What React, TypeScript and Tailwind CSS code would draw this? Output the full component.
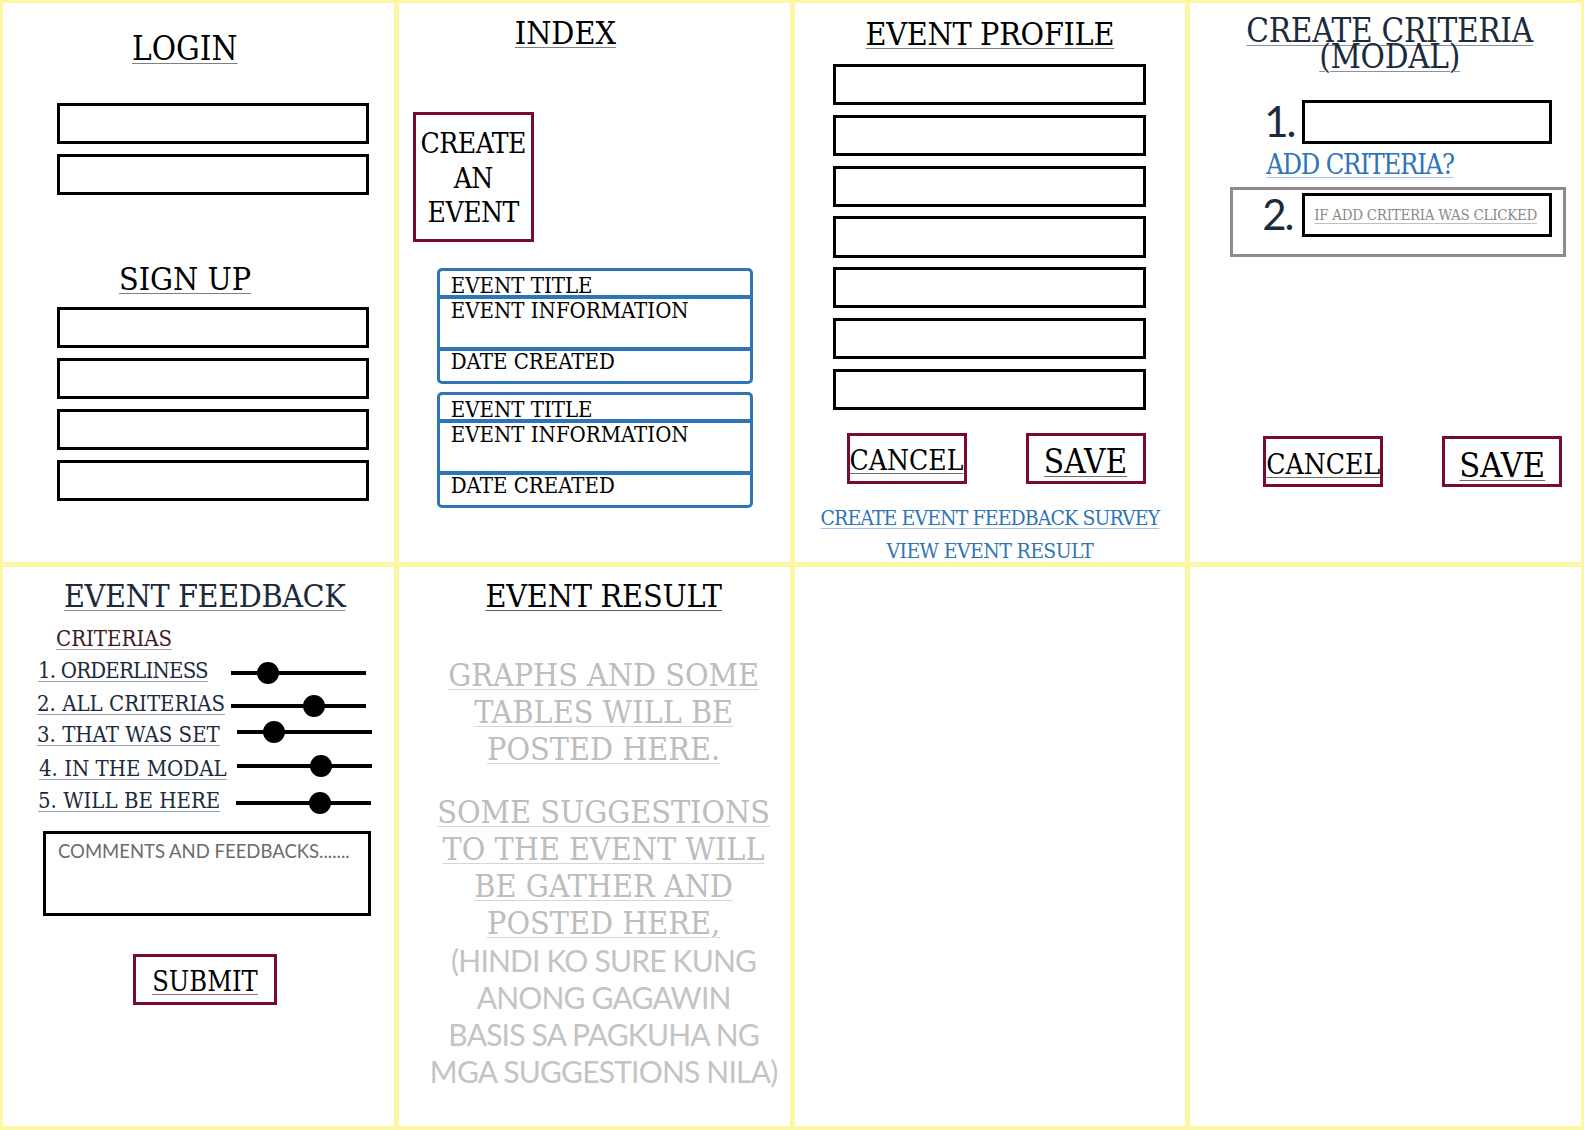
import React from "react";

const SERIF = "font-['DejaVu_Serif',serif] [font-stretch:condensed]";
const SANS = "font-['Lato',sans-serif]";
const UL = "underline decoration-1 underline-offset-[3px]";

function Box({ className = "" }: { className?: string }) {
  return <div className={`border-[3px] border-black bg-white ${className}`} />;
}

function EventCard({ className = "" }: { className?: string }) {
  return (
    <div
      className={`w-[316px] h-[116px] border-[3px] border-[#2e75b6] rounded-[5px] flex flex-col overflow-hidden ${SERIF} text-[22px] leading-none text-black whitespace-nowrap ${className}`}
    >
      <div className="h-[24px] pl-[11px] pt-[4px]">EVENT TITLE</div>
      <div className="h-[4px] bg-[#2e75b6]" />
      <div className="h-[48px] pl-[11px] pt-[1px]">EVENT INFORMATION</div>
      <div className="h-[4px] bg-[#2e75b6]" />
      <div className="flex-1 pl-[11px]">DATE CREATED</div>
    </div>
  );
}

function Slider({ knob }: { knob: number }) {
  return (
    <div className="relative w-[135px] h-[22px] flex items-center">
      <div className="w-full h-[4px] bg-black" />
      <div
        className="absolute top-0 w-[22px] h-[22px] rounded-full bg-black"
        style={{ left: knob - 11 }}
      />
    </div>
  );
}

function CriteriaRow({
  label,
  labelW,
  pl,
  textMt,
  sliderMt,
  knob,
  h,
  tight = false,
}: {
  label: string;
  labelW: number;
  pl: number;
  textMt: number;
  sliderMt: number;
  knob: number;
  h: number;
  tight?: boolean;
}) {
  return (
    <div className="flex items-start" style={{ height: h }}>
      <div style={{ width: labelW, paddingLeft: pl, marginTop: textMt }} className="shrink-0">
        <span
          className={`${SERIF} text-[22px] leading-none text-[#1c2b3b] whitespace-nowrap ${UL} decoration-[#9aa3ad] ${
            tight ? "tracking-[-0.8px]" : "tracking-normal"
          }`}
        >
          {label}
        </span>
      </div>
      <div style={{ marginTop: sliderMt }}>
        <Slider knob={knob} />
      </div>
    </div>
  );
}

function Btn({
  children,
  className = "",
  textCls = "",
}: {
  children: React.ReactNode;
  className?: string;
  textCls?: string;
}) {
  return (
    <div
      className={`w-[120px] h-[51px] border-[3px] border-[#7a0a33] flex items-center justify-center ${className}`}
    >
      <span className={`${SERIF} mt-[6px] leading-none text-black ${UL} decoration-[#6f6f6f] ${textCls}`}>
        {children}
      </span>
    </div>
  );
}

export default function App() {
  return (
    <div className="w-[1584px] h-[1130px] bg-[#fdf6a3] pt-[3px] pl-[3px] pr-[3px] pb-[4px] grid grid-cols-4 grid-rows-2 gap-[5px] overflow-hidden">
      {/* LOGIN */}
      <div className="bg-white flex flex-col items-start">
        <div className={`${SERIF} ml-[129px] mt-[29px] text-[33px] leading-none text-black ${UL} decoration-[#7f7f7f]`}>
          LOGIN
        </div>
        <Box className="ml-[54px] mt-[38px] w-[312px] h-[41px]" />
        <Box className="ml-[54px] mt-[10px] w-[312px] h-[41px]" />
        <div className={`${SERIF} ml-[116px] mt-[68px] text-[32px] leading-none text-black ${UL} decoration-[#7f7f7f]`}>
          SIGN UP
        </div>
        <Box className="ml-[54px] mt-[12px] w-[312px] h-[41px]" />
        <Box className="ml-[54px] mt-[10px] w-[312px] h-[41px]" />
        <Box className="ml-[54px] mt-[10px] w-[312px] h-[41px]" />
        <Box className="ml-[54px] mt-[10px] w-[312px] h-[41px]" />
      </div>

      {/* INDEX */}
      <div className="bg-white flex flex-col items-start">
        <div className={`${SERIF} ml-[116px] mt-[14px] text-[32px] leading-none text-black ${UL} decoration-[#7f7f7f]`}>
          INDEX
        </div>
        <div
          className={`ml-[14px] mt-[63px] w-[121px] h-[130px] border-[3px] border-[#7a0a33] flex flex-col items-center justify-center pt-[4px] ${SERIF} text-[28px] tracking-[-0.5px] leading-[34.5px] text-black`}
        >
          <span>CREATE</span>
          <span>AN</span>
          <span>EVENT</span>
        </div>
        <EventCard className="ml-[38px] mt-[26px]" />
        <EventCard className="ml-[38px] mt-[8px]" />
      </div>

      {/* EVENT PROFILE */}
      <div className="bg-white flex flex-col items-start">
        <div className={`${SERIF} self-center mt-[15px] text-[32px] tracking-[-0.3px] leading-none text-black ${UL} decoration-[#7f7f7f]`}>
          EVENT PROFILE
        </div>
        <Box className="ml-[38px] mt-[14px] w-[313px] h-[42px]" />
        <Box className="ml-[38px] mt-[9.3px] w-[313px] h-[42px]" />
        <Box className="ml-[38px] mt-[9.3px] w-[313px] h-[42px]" />
        <Box className="ml-[38px] mt-[9.3px] w-[313px] h-[42px]" />
        <Box className="ml-[38px] mt-[9.3px] w-[313px] h-[42px]" />
        <Box className="ml-[38px] mt-[9.3px] w-[313px] h-[42px]" />
        <Box className="ml-[38px] mt-[9.3px] w-[313px] h-[42px]" />
        <div className="flex mt-[23px]">
          <Btn className="ml-[52px]" textCls="text-[28px]">CANCEL</Btn>
          <Btn className="ml-[59px]" textCls="text-[33px]">SAVE</Btn>
        </div>
        <div className={`${SERIF} self-center mt-[24px] text-[21px] tracking-[-0.9px] leading-none text-[#2e75b6] ${UL} decoration-[#a8c4e4]`}>
          CREATE EVENT FEEDBACK SURVEY
        </div>
        <div className={`${SERIF} self-center mt-[12px] text-[21px] tracking-[-0.6px] leading-none text-[#2e75b6]`}>
          VIEW EVENT RESULT
        </div>
      </div>

      {/* CREATE CRITERIA */}
      <div className="bg-white flex flex-col items-start">
        <div
          className={`${SERIF} self-center ml-[8px] mt-[15px] text-[33px] tracking-[-0.3px] leading-[26px] text-[#1c2b3b] text-center ${UL} decoration-[#8a929c]`}
        >
          CREATE CRITERIA
          <br />
          (MODAL)
        </div>
        <div className="flex items-start ml-[74px] mt-[30px]">
          <div className={`${SANS} w-[38px] text-[42px] tracking-[-2px] leading-none text-[#1c2b3b]`}>1.</div>
          <Box className="w-[250px] h-[44px]" />
        </div>
        <div className={`${SERIF} ml-[76px] mt-[7px] text-[27px] tracking-[-1.2px] leading-none text-[#2e75b6] ${UL} decoration-[#a8c4e4]`}>
          ADD CRITERIA?
        </div>
        <div className="ml-[40px] mt-[9px] w-[336px] h-[70px] border-[3px] border-[#8c8c8c] flex items-start pl-[29px] pt-[3px]">
          <div className={`${SANS} w-[40px] text-[42px] tracking-[-2px] leading-none text-[#1c2b3b]`}>2.</div>
          <div className="w-[250px] h-[44px] border-[3px] border-black flex items-center pl-[9px]">
            <span className={`${SERIF} text-[15px] tracking-[-0.3px] leading-none text-[#8a8a8a] whitespace-nowrap ${UL} decoration-[#c0c0c0]`}>
              IF ADD CRITERIA WAS CLICKED
            </span>
          </div>
        </div>
        <div className="flex mt-[179px]">
          <Btn className="ml-[73px]" textCls="text-[28px]">CANCEL</Btn>
          <Btn className="ml-[59px]" textCls="text-[34px]">SAVE</Btn>
        </div>
      </div>

      {/* EVENT FEEDBACK */}
      <div className="bg-white flex flex-col items-start">
        <div className={`${SERIF} ml-[61px] mt-[13px] text-[32px] tracking-[-0.4px] leading-none text-[#1c2b3b] ${UL} decoration-[#8a929c]`}>
          EVENT FEEDBACK
        </div>
        <div className={`${SERIF} ml-[53px] mt-[16px] text-[22px] leading-none text-[#3b1d24] ${UL} decoration-[#a9a0a2]`}>
          CRITERIAS
        </div>
        <div className="mt-[10px] flex flex-col">
          <CriteriaRow label="1. ORDERLINESS" labelW={228} pl={35} textMt={0} sliderMt={2} knob={37} h={33} tight />
          <CriteriaRow label="2. ALL CRITERIAS" labelW={228} pl={34} textMt={0} sliderMt={2} knob={83} h={28} />
          <CriteriaRow label="3. THAT WAS SET" labelW={234} pl={34} textMt={3} sliderMt={0} knob={37} h={34} />
          <CriteriaRow label="4. IN THE MODAL" labelW={234} pl={36} textMt={3} sliderMt={0} knob={84} h={35} />
          <CriteriaRow label="5. WILL BE HERE" labelW={233} pl={35} textMt={0} sliderMt={2} knob={84} h={24} />
        </div>
        <div className="ml-[40px] mt-[17px] w-[328px] h-[85px] border-[3px] border-black pl-[12px] pt-[6px]">
          <span className={`${SANS} text-[18.5px] leading-none text-[#6b6b6b] whitespace-nowrap`}>
            COMMENTS AND FEEDBACKS.......
          </span>
        </div>
        <div className="ml-[130px] mt-[38px] w-[144px] h-[51px] border-[3px] border-[#7a0a33] flex items-center justify-center">
          <span className={`${SERIF} mt-[4px] text-[27px] leading-none text-black ${UL} decoration-[#9b6a7c]`}>SUBMIT</span>
        </div>
      </div>

      {/* EVENT RESULT */}
      <div className="bg-white flex flex-col items-center pl-[19px]">
        <div className={`${SERIF} mt-[13px] text-[32px] tracking-[-0.2px] leading-none text-black ${UL} decoration-[#5f5f5f]`}>
          EVENT RESULT
        </div>
        <div className={`${SERIF} mt-[45px] text-[32px] leading-[37px] text-[#bdbdbd] text-center whitespace-nowrap ${UL} decoration-[#d6d6d6]`}>
          GRAPHS AND SOME
          <br />
          TABLES WILL BE
          <br />
          POSTED HERE.
        </div>
        <div className="mt-[26px] flex flex-col items-center text-center whitespace-nowrap">
          <div className={`${SERIF} text-[32px] leading-[37px] text-[#bdbdbd] ${UL} decoration-[#d6d6d6]`}>
            SOME SUGGESTIONS
            <br />
            TO THE EVENT WILL
            <br />
            BE GATHER AND
            <br />
            POSTED HERE,
          </div>
          <div className={`${SANS} text-[30px] tracking-[-0.8px] leading-[37px] text-[#c4c4c4]`}>
            (HINDI KO SURE KUNG
            <br />
            ANONG GAGAWIN
            <br />
            BASIS SA PAGKUHA NG
            <br />
            MGA SUGGESTIONS NILA)
          </div>
        </div>
      </div>

      <div className="bg-white" />
      <div className="bg-white" />
    </div>
  );
}
